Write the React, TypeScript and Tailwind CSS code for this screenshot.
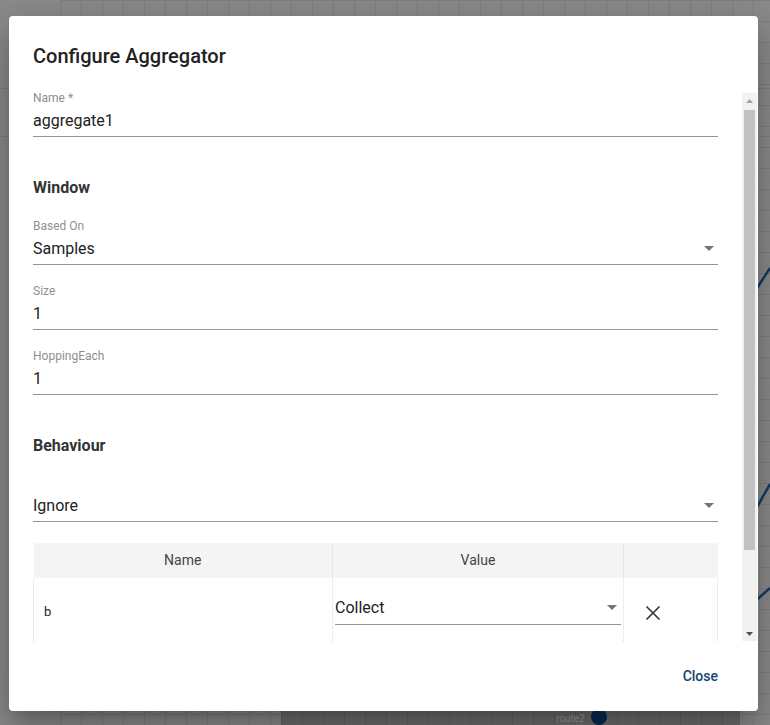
import React from 'react';

const Caret: React.FC<{ color?: string }> = ({ color = '#757575' }) => (
    <svg width="10" height="5" viewBox="0 0 10 5" className="shrink-0">
        <path d="M0 0 L10 0 L5 5 Z" fill={color} />
    </svg>
);

const Field: React.FC<{ label?: string; value: string; select?: boolean; className?: string }> = ({ label, value, select, className }) => (
    <div className={className}>
        <div className="h-[12px] text-[12px] leading-[12px] text-[#8f8f8f]">{label}</div>
        <div className="flex items-center h-[33px] pt-[7px] pb-[6px] border-b border-[#949494]">
            <span className="flex-1 text-[16px] leading-[19px] text-[#222]">{value}</span>
            {select && <span className="pr-[4px]"><Caret /></span>}
        </div>
    </div>
);

// classic scrollbar, drawn since the headless browser hides its own
const Scrollbar: React.FC = () => (
    <div className="w-[15px] mt-[1px] mb-[1px] bg-[#f1f1f1] flex flex-col">
        <div className="h-[15px] flex items-center justify-center">
            <svg width="7" height="4" viewBox="0 0 7 4"><path d="M0 4 L7 4 L3.5 0 Z" fill="#a3a3a3" /></svg>
        </div>
        <div className="mx-[2px] mt-[2px] h-[440px] bg-[#c1c1c1]" />
        <div className="flex-1" />
        <div className="h-[15px] flex items-center justify-center">
            <svg width="7" height="4" viewBox="0 0 7 4"><path d="M0 0 L7 0 L3.5 4 Z" fill="#505050" /></svg>
        </div>
    </div>
);

const Backdrop: React.FC = () => (
    <div className="absolute inset-0 bg-[#8b8b8b]">
        <div className="absolute left-[60px] right-0 top-0 bottom-0 bg-[linear-gradient(#7f7f7f_1px,transparent_1px),linear-gradient(90deg,#7f7f7f_1px,transparent_1px)] bg-[size:21px_21px]" />
        <div className="absolute left-0 right-0 top-[88px] h-px bg-[#7f7f7f]" />
        <div className="absolute left-0 right-0 top-[136px] h-px bg-[#7f7f7f]" />
        <div className="absolute left-[281px] right-[30px] top-[705px] bottom-0 bg-[#6e6e6e] bg-[linear-gradient(90deg,#646464_1px,transparent_1px)] bg-[size:21px_21px]" />
        <div className="absolute left-[556px] top-[711px] text-[10px] text-[#9a9a9a] font-['Roboto',sans-serif]">route2</div>
        <div className="absolute left-[591px] top-[709px] w-[16px] h-[16px] rounded-full bg-[#0a2a52]" />
        <svg className="absolute inset-0" width="770" height="725">
            <path d="M752 296 L770 268" stroke="#123c6c" strokeWidth="2.5" fill="none" />
            <path d="M752 516 L770 484" stroke="#123c6c" strokeWidth="2.5" fill="none" />
            <path d="M752 604 L770 588" stroke="#123c6c" strokeWidth="2.5" fill="none" />
        </svg>
    </div>
);

const App: React.FC = () => {
    return (
        <div className="relative w-[770px] h-[725px] overflow-hidden font-['Roboto',sans-serif]">
            <Backdrop />
            <div className="relative pt-[16px] pl-[9px]">
                <div className="w-[749px] h-[695px] bg-white rounded-[4px] shadow-[0_11px_15px_-7px_rgba(0,0,0,0.2),0_24px_38px_3px_rgba(0,0,0,0.14),0_9px_46px_8px_rgba(0,0,0,0.12)] flex flex-col">
                    <div className="px-6 pt-6 pb-5">
                        <h2 className="text-[20px] leading-[32px] font-medium text-[#222]">Configure Aggregator</h2>
                    </div>
                    <div className="h-[550px] flex pr-[1px]">
                        <div className="flex-1 overflow-hidden px-6">
                            <Field label="Name *" value="aggregate1" />

                            <h3 className="mt-[41px] h-[20px] text-[16px] leading-[20px] font-bold text-[#333]">Window</h3>
                            <Field className="mt-[22px]" label="Based On" value="Samples" select />
                            <Field className="mt-[20px]" label="Size" value="1" />
                            <Field className="mt-[20px]" label="HoppingEach" value="1" />

                            <h3 className="mt-[41px] h-[20px] text-[16px] leading-[20px] font-bold text-[#333]">Behaviour</h3>
                            <Field className="mt-[21px]" value="Ignore" select />

                            <table className="mt-[21px] w-full border-collapse text-[14px] text-[#444]">
                                <thead>
                                    <tr className="h-[35px] bg-[#f4f4f4]">
                                        <th className="w-[299px] font-normal border-r border-[#e6e6e6]">Name</th>
                                        <th className="w-[291px] font-normal border-r border-[#e6e6e6]">Value</th>
                                        <th className="font-normal" />
                                    </tr>
                                </thead>
                                <tbody>
                                    <tr className="h-[68px]">
                                        <td className="pl-[10px] text-[13px] text-[#222] border-l border-r border-[#ececec]">b</td>
                                        <td className="px-[2px] border-r border-[#ececec] align-top pt-[19px]">
                                            <div className="flex items-center h-[28px] pb-[6px] border-b border-[#949494]">
                                                <span className="flex-1 text-[16px] leading-[19px] text-[#222]">Collect</span>
                                                <span className="pr-[4px]"><Caret /></span>
                                            </div>
                                        </td>
                                        <td className="border-r border-[#ececec]">
                                            <div className="pl-[21px] pt-[2px]">
                                                <svg width="16" height="16" viewBox="0 0 16 16">
                                                    <path d="M1.5 1.5 L14.5 14.5 M14.5 1.5 L1.5 14.5" stroke="#333" strokeWidth="1.6" fill="none" />
                                                </svg>
                                            </div>
                                        </td>
                                    </tr>
                                </tbody>
                            </table>
                        </div>
                        <Scrollbar />
                    </div>
                    <div className="flex-1 flex items-center justify-end pr-[32px]">
                        <button className="px-2 h-[36px] text-[14px] font-medium text-[#173f72]">Close</button>
                    </div>
                </div>
            </div>
        </div>
    );
};

export default App;
